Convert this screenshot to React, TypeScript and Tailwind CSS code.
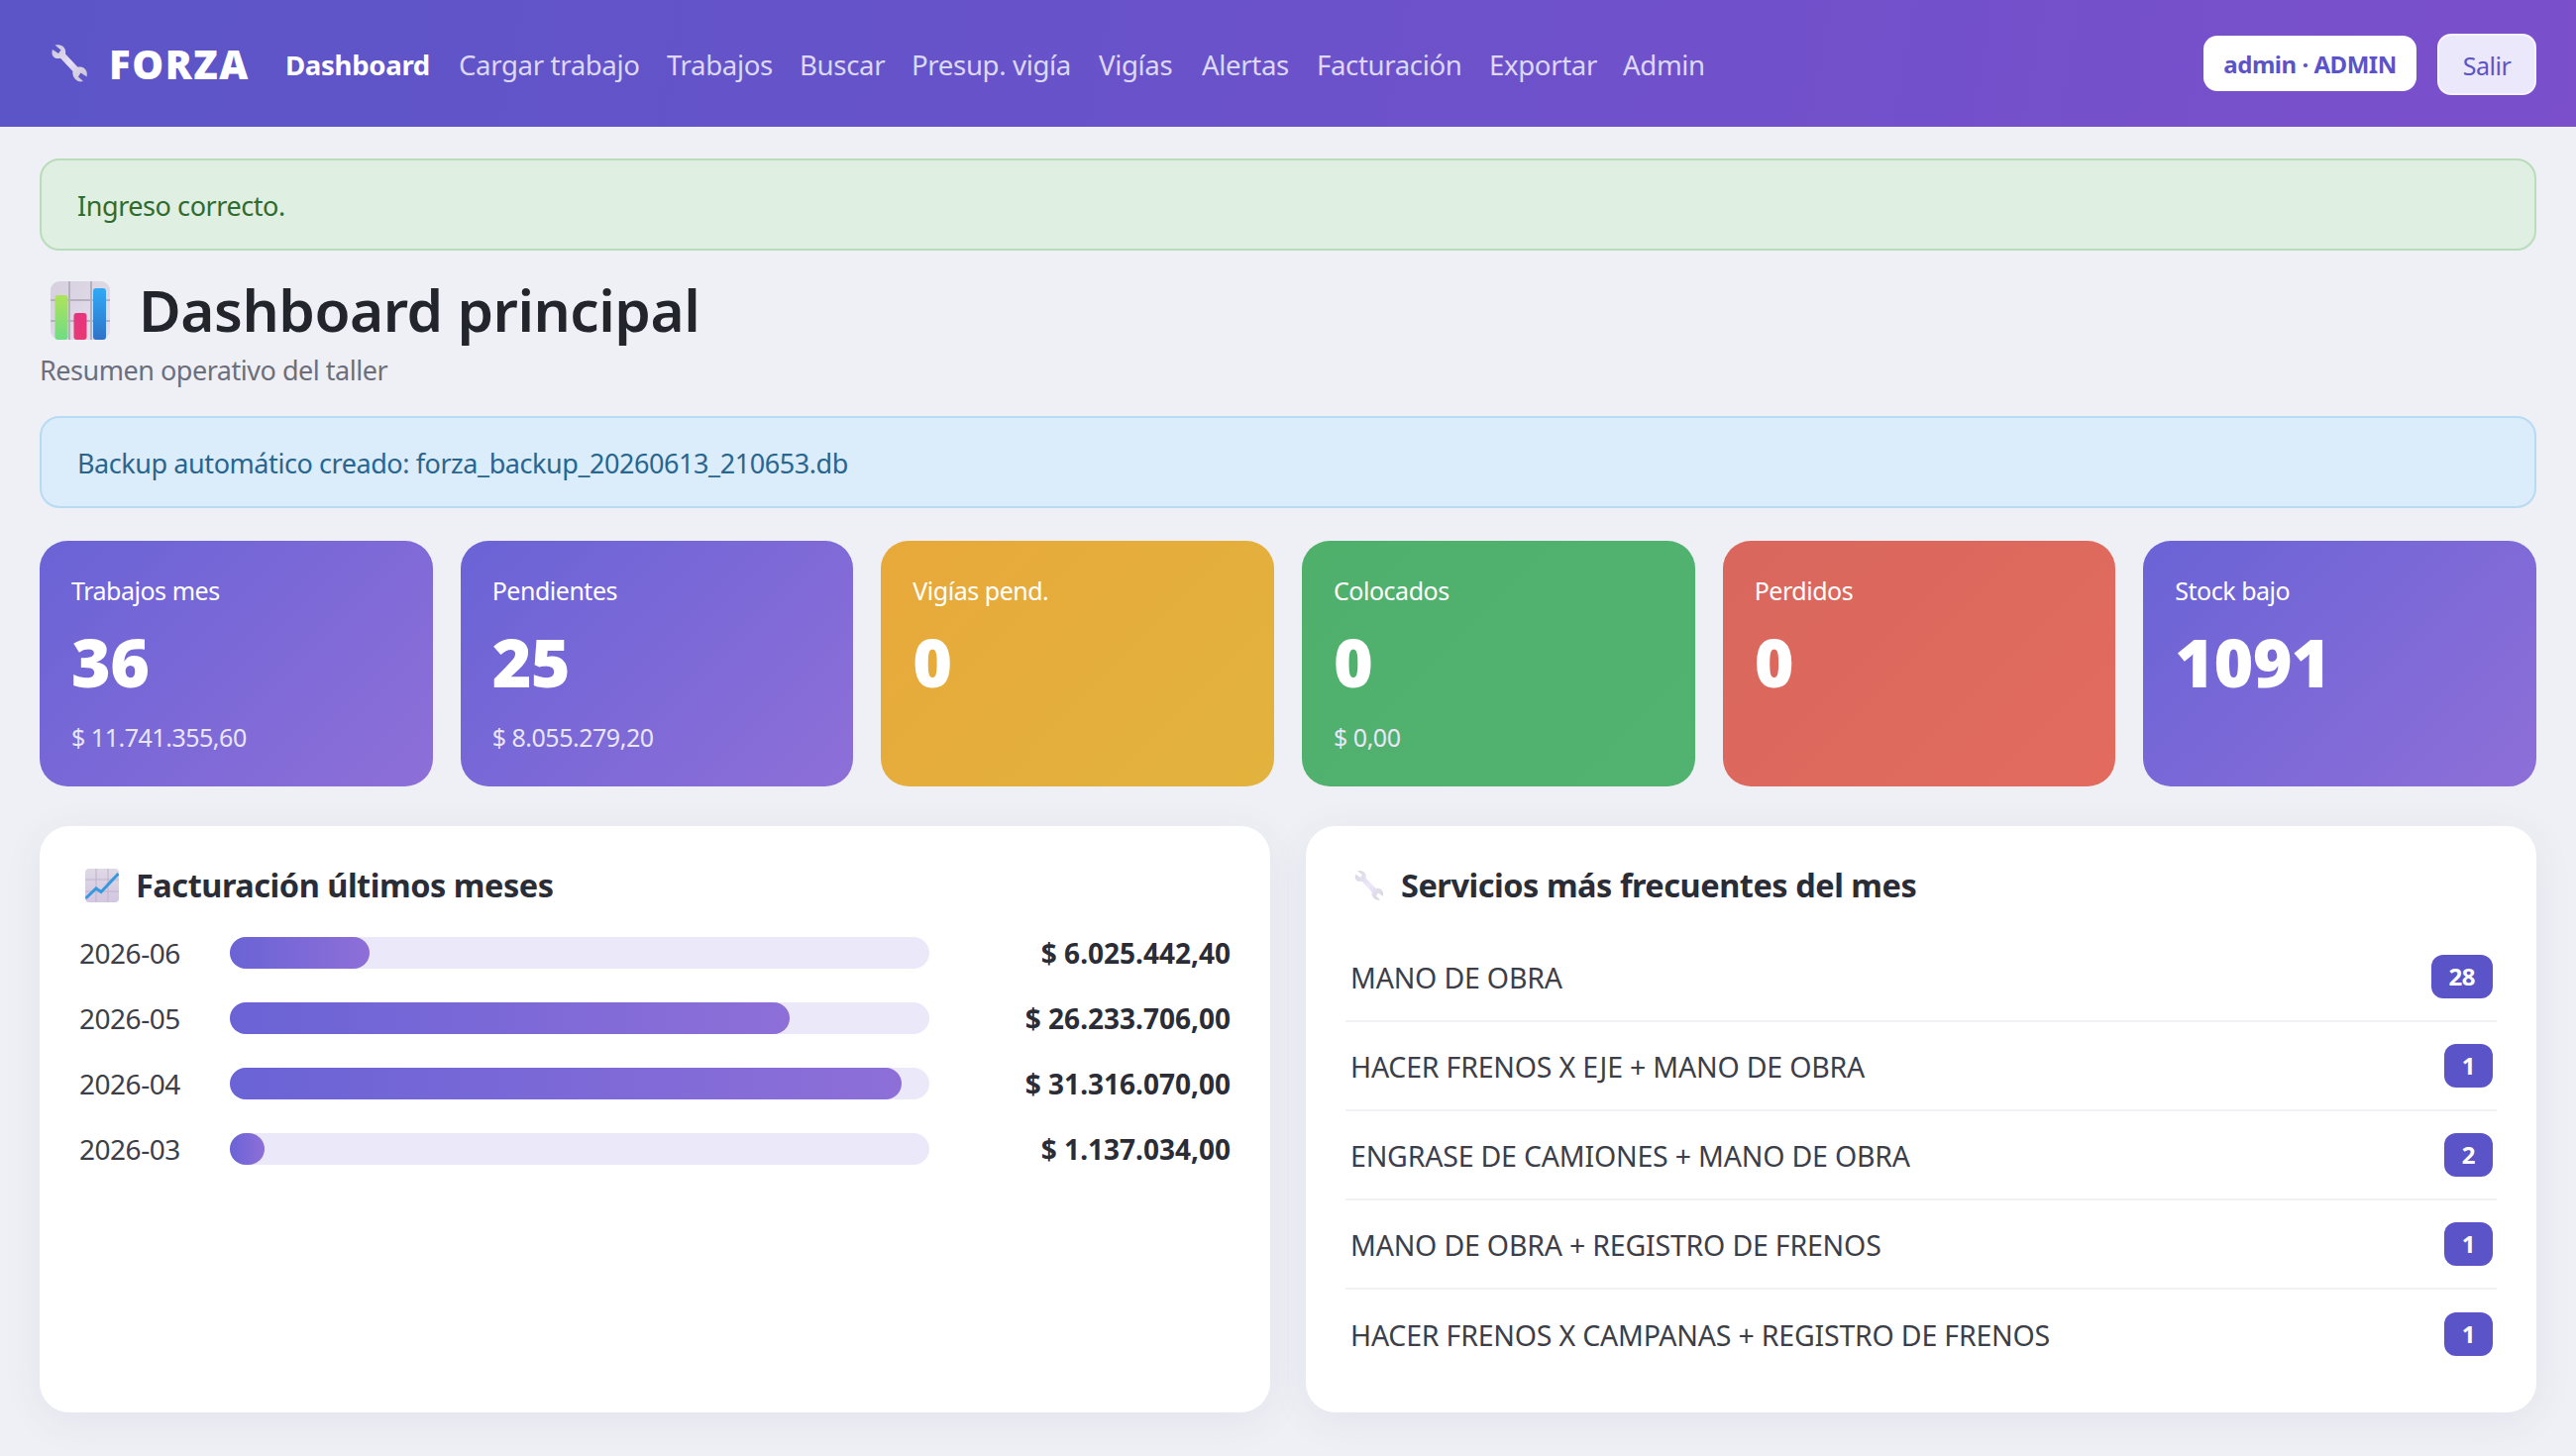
const navLinks = [
  { label: "Cargar trabajo", w: "w-[210px]" },
  { label: "Trabajos", w: "w-[134px]" },
  { label: "Buscar", w: "w-[113px]" },
  { label: "Presup. vigía", w: "w-[189px]" },
  { label: "Vigías", w: "w-[104px]" },
  { label: "Alertas", w: "w-[116px]" },
  { label: "Facturación", w: "w-[174px]" },
  { label: "Exportar", w: "w-[135px]" },
  { label: "Admin", w: "" },
];

const purple = "bg-[linear-gradient(135deg,#6a63d6,#8e6fd8)]";

const stats = [
  { label: "Trabajos mes", value: "36", sub: "$ 11.741.355,60", bg: purple },
  { label: "Pendientes", value: "25", sub: "$ 8.055.279,20", bg: purple },
  { label: "Vigías pend.", value: "0", bg: "bg-[linear-gradient(135deg,#e8a93a,#e2b33e)]" },
  { label: "Colocados", value: "0", sub: "$ 0,00", bg: "bg-[linear-gradient(135deg,#4fb06c,#52b270)]" },
  { label: "Perdidos", value: "0", bg: "bg-[linear-gradient(135deg,#d9675d,#e26b5e)]" },
  { label: "Stock bajo", value: "1091", bg: purple },
];

const billing = [
  { month: "2026-06", pct: 20, amount: "$ 6.025.442,40" },
  { month: "2026-05", pct: 80, amount: "$ 26.233.706,00" },
  { month: "2026-04", pct: 96, amount: "$ 31.316.070,00" },
  { month: "2026-03", pct: 5, amount: "$ 1.137.034,00" },
];

const services = [
  { name: "MANO DE OBRA", count: 28 },
  { name: "HACER FRENOS X EJE + MANO DE OBRA", count: 1 },
  { name: "ENGRASE DE CAMIONES + MANO DE OBRA", count: 2 },
  { name: "MANO DE OBRA + REGISTRO DE FRENOS", count: 1 },
  { name: "HACER FRENOS X CAMPANAS + REGISTRO DE FRENOS", count: 1 },
];

function WrenchIcon({ className }: { className: string }) {
  return (
    <svg viewBox="0 0 40 40" className={className}>
      <defs>
        <linearGradient id="wr" x1="0" y1="0" x2="1" y2="1">
          <stop offset="0" stopColor="#c9c4d6" />
          <stop offset="0.5" stopColor="#e6dff6" />
          <stop offset="1" stopColor="#c4bfd0" />
        </linearGradient>
      </defs>
      <path
        fill="url(#wr)"
        d="M6.5 1.5 L12.5 6.5 L10 10 L4 6 C2.5 10 4 14 8 15 C9.5 15.3 10.8 15 12 14.7 L24.5 28 C24 30 24.5 33.5 27 36 C29.5 38.5 32.5 39 35 38 L30 33.5 L32.5 29.5 L38.5 33.5 C39.5 30 38.5 26.5 35.5 24.5 C33.5 23.3 31.5 23.3 29.5 23.8 L17 10.5 C17.8 7.5 16.5 4 14 2.5 C12 1.2 9 0.8 6.5 1.5 Z"
      />
    </svg>
  );
}

function BarsIcon() {
  return (
    <svg viewBox="0 0 60 60" className="h-[60px] w-[60px] shrink-0">
      <defs>
        <linearGradient id="bg1" x1="0" y1="0" x2="1" y2="1">
          <stop offset="0" stopColor="#d6d0de" />
          <stop offset="1" stopColor="#e6e0ee" />
        </linearGradient>
        <linearGradient id="g1" x1="0" y1="0" x2="0" y2="1">
          <stop offset="0" stopColor="#aee35a" />
          <stop offset="1" stopColor="#6fdc84" />
        </linearGradient>
        <linearGradient id="g2" x1="0" y1="0" x2="0" y2="1">
          <stop offset="0" stopColor="#e5347f" />
          <stop offset="1" stopColor="#e83a74" />
        </linearGradient>
        <linearGradient id="g3" x1="0" y1="0" x2="0" y2="1">
          <stop offset="0" stopColor="#30aaf5" />
          <stop offset="1" stopColor="#2f72c8" />
        </linearGradient>
      </defs>
      <rect x="0" y="0" width="60" height="59" rx="9" fill="url(#bg1)" />
      <path d="M19 0V59M41 0V59M0 19H60M0 40H60" stroke="#b6b0bf" strokeWidth="2" />
      <rect x="4.5" y="14" width="13" height="45" rx="3" fill="url(#g1)" />
      <rect x="23.5" y="32" width="13" height="27" rx="3" fill="url(#g2)" />
      <rect x="43" y="7" width="13" height="52" rx="3" fill="url(#g3)" />
    </svg>
  );
}

function TrendIcon() {
  return (
    <svg viewBox="0 0 34 34" className="h-[34px] w-[34px] shrink-0">
      <defs>
        <linearGradient id="tr" x1="0" y1="0" x2="0" y2="1">
          <stop offset="0" stopColor="#dfd9e6" />
          <stop offset="1" stopColor="#d3c6e2" />
        </linearGradient>
      </defs>
      <rect x="0" y="0" width="34" height="34" rx="4" fill="url(#tr)" />
      <path d="M11 0V34M23 0V34M0 11H34M0 23H34" stroke="#bdb5c9" strokeWidth="1" />
      <path d="M0.5 30 L11 20 L16 23.5 L33.5 5" fill="none" stroke="#379ade" strokeWidth="3" />
    </svg>
  );
}

function Alert({ text, className }: { text: string; className: string }) {
  return (
    <div
      className={`flex h-[93px] items-center rounded-[20px] border-2 px-[36px] pt-[3px] text-[27px] tracking-[-0.016em] ${className}`}
    >
      {text}
    </div>
  );
}

export default function App() {
  return (
    <div className="h-[1470px] overflow-hidden bg-[#eff0f5] font-['Noto_Sans',sans-serif] tracking-[-0.03em] text-[#2b2d36]">
      <header className="flex h-[128px] items-center bg-[linear-gradient(100deg,#5b55c8,#7b4fcc)] px-[40px] text-[#dcd8f6]">
        <div className="flex h-full w-[248px] items-center pl-[9px]">
          <WrenchIcon className="h-[40px] w-[40px] shrink-0" />
          <span className="ml-[21px] pt-[2px] text-[40px] font-black tracking-[0.04em] text-white">FORZA</span>
        </div>
        <a className="w-[175px] pt-[3px] text-[27.6px] font-bold tracking-[-0.012em] text-white">Dashboard</a>
        {navLinks.map((link) => (
          <a key={link.label} className={`pt-[3px] text-[27.6px] tracking-[-0.013em] ${link.w}`}>
            {link.label}
          </a>
        ))}
        <div className="ml-auto flex items-center gap-[21px]">
          <span className="flex h-[56px] w-[215px] items-center justify-center rounded-[14px] bg-white pt-[2px] text-[24px] font-bold text-[#5b54c8]">
            admin · ADMIN
          </span>
          <button className="mt-[2px] h-[62px] w-[100px] rounded-[14px] border-2 border-[#f5f3ff] bg-[#ebe8fc] pt-[3px] text-[25px] text-[#5b54c8]">
            Salir
          </button>
        </div>
      </header>

      <main className="px-[40px] pt-[32px]">
        <Alert text="Ingreso correcto." className="border-[#b9dcbb] bg-[#dfefe2] text-[#2f6b2f]" />

        <div className="mt-[30px] flex h-[62px] items-center pl-[11px]">
          <BarsIcon />
          <h1 className="ml-[29px] pb-[3px] text-[58.5px] font-semibold text-[#23252d]">Dashboard principal</h1>
        </div>
        <p className="mt-[9px] text-[27px] leading-[40px] text-[#6c6f7b]">Resumen operativo del taller</p>

        <Alert
          text="Backup automático creado: forza_backup_20260613_210653.db"
          className="mt-[26px] border-[#b7dbf3] bg-[#dbecfb] text-[#28658f]"
        />

        <section className="mt-[33px] grid grid-cols-6 gap-[28px]">
          {stats.map((stat) => (
            <div key={stat.label} className={`h-[248px] rounded-[28px] px-[32px] pt-[30px] text-white ${stat.bg}`}>
              <div className="text-[25px] leading-[40px]">{stat.label}</div>
              <div className="mt-[7px] text-[68px] leading-[90px] font-black tracking-[-0.01em]">{stat.value}</div>
              {stat.sub ? <div className="mt-[11px] text-[25px] leading-[40px] text-[#e9e6fa]">{stat.sub}</div> : null}
            </div>
          ))}
        </section>

        <section className="mt-[40px] grid grid-cols-2 gap-[36px]">
          <div className="h-[592px] rounded-[30px] bg-white px-[40px] pt-[40px] shadow-[0_8px_40px_rgba(70,70,130,0.07)]">
            <div className="flex h-[40px] items-center pl-[6px]">
              <TrendIcon />
              <h2 className="ml-[17px] text-[32.5px] font-bold text-[#2b2d36]">Facturación últimos meses</h2>
            </div>
            <div className="mt-[32px] space-y-[34px]">
              {billing.map((row) => (
                <div key={row.month} className="flex h-[32px] items-center">
                  <span className="w-[152px] text-[28px] text-[#3c3e48]">{row.month}</span>
                  <div className="h-[32px] w-[706px] rounded-full bg-[#ebe9f9]">
                    <div
                      className="h-full rounded-full bg-[linear-gradient(90deg,#6a63d6,#8e6fd8)]"
                      style={{ width: `${row.pct}%` }}
                    />
                  </div>
                  <span className="flex-1 text-right text-[28px] font-bold tracking-normal">{row.amount}</span>
                </div>
              ))}
            </div>
          </div>

          <div className="h-[592px] rounded-[30px] bg-white px-[40px] pt-[40px] shadow-[0_8px_40px_rgba(70,70,130,0.07)]">
            <div className="flex h-[40px] items-center pl-[7px]">
              <WrenchIcon className="h-[32px] w-[32px] shrink-0 opacity-70" />
              <h2 className="ml-[17px] text-[32.5px] font-bold text-[#2b2d36]">Servicios más frecuentes del mes</h2>
            </div>
            <ul className="mt-[28px]">
              {services.map((service, i) => (
                <li
                  key={service.name}
                  className={`flex h-[90px] items-center justify-between pr-[4px] pl-[5px] ${
                    i < services.length - 1 ? "border-b-2 border-[#f0f0f5]" : ""
                  }`}
                >
                  <span className="pt-[3px] text-[28.5px] tracking-[-0.007em] text-[#3c3e48]">{service.name}</span>
                  <span className="flex h-[44px] items-center justify-center rounded-[12px] bg-[#5b54c8] px-[18px] text-[24px] font-bold text-white">
                    {service.count}
                  </span>
                </li>
              ))}
            </ul>
          </div>
        </section>
      </main>
    </div>
  );
}
